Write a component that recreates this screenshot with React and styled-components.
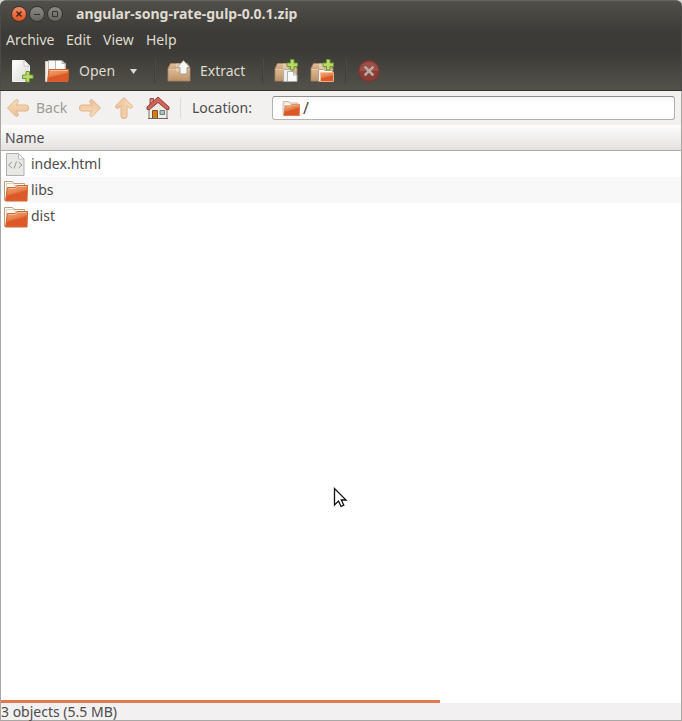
import styled, { createGlobalStyle, css } from 'styled-components';

const GlobalStyle = createGlobalStyle`
  * {
    box-sizing: border-box;
  }

  body {
    margin: 0;
    background: #d8d7d4;
    font-family: "Noto Sans", "Open Sans", sans-serif;
    font-size: 14px;
    line-height: 20px;
    color: #4c4c4c;
  }

  button, input {
    font: inherit;
    color: inherit;
  }
`;

const Window = styled.div`
  display: flex;
  flex-direction: column;
  min-height: 100vh;
  position: relative;
`;

/* --- DARK TOP --- */
const Chrome = styled.header`
  color: #dfdbd2;
  background: linear-gradient(180deg, #504f49 0, #3c3b37 32px, #3c3b37 52px, #53524a 100%);
  border: 1px solid #4b4a46;
  border-top-color: #67655f;
  border-bottom-color: #35332f;
  border-radius: 6px 6px 0 0;
`;

const TitleBar = styled.div`
  display: flex;
  align-items: center;
  gap: 2px;
  height: 26px;
  padding-left: 10px;
`;

const WindowButton = styled.button`
  display: flex;
  width: 16px;
  height: 16px;
  padding: 0;
  border: 1px solid #353430;
  border-radius: 50%;
  background: ${({ $close }) => ($close
    ? 'linear-gradient(180deg, #f58a66, #e2531f)'
    : 'linear-gradient(180deg, #8b8a84, #65645e)')};

  svg {
    width: 14px;
    height: 14px;
  }
`;

const Title = styled.h1`
  margin: 0 0 0 11px;
  font-size: 14px;
  line-height: 20px;
  font-weight: 700;
`;

const MenuBar = styled.nav`
  display: flex;
  height: 25px;
  padding-left: 5px;
`;

const MenuItem = styled.button`
  width: ${({ $width }) => $width}px;
  padding: 0;
  border: 0;
  background: none;
  text-align: left;
  white-space: nowrap;
`;

const Toolbar = styled.div`
  display: flex;
  align-items: center;
  height: 38px;
  padding-left: 9px;
`;

const ToolButton = styled.button`
  display: flex;
  align-items: center;
  flex: none;
  gap: ${({ $gap = 0 }) => $gap}px;
  width: ${({ $width }) => $width}px;
  height: 26px;
  padding: 0;
  border: 0;
  background: none;
  white-space: nowrap;

  svg {
    flex: none;
  }

  &:disabled {
    color: #9b9c95;
  }
`;

const Separator = styled.span`
  flex: none;
  width: 1px;
  height: ${({ $light }) => ($light ? 20 : 24)}px;
  margin-right: ${({ $space }) => $space}px;
  background: ${({ $light }) => ($light ? '#dcdad8' : '#403f3a')};
  ${({ $light }) => !$light && css`
    box-shadow: 1px 0 #4d4c46;
  `}
`;

/* --- LOCATION --- */
const LocationBar = styled.div`
  display: flex;
  align-items: center;
  height: 34px;
  padding: 0 6px 0 5px;
  background: #f3f1f0;
  border: 0 solid #a9a8a5;
  border-width: 0 1px;
`;

const LocationLabel = styled.label`
  flex: none;
  width: 80px;
`;

const LocationField = styled.div`
  display: flex;
  flex: 1;
  align-items: center;
  gap: 3px;
  height: 24px;
  padding-left: 9px;
  border: 1px solid #b5b2ae;
  border-top-color: #8f8d89;
  border-radius: 3px;
  background: linear-gradient(180deg, #f7f7f6, #fff 6px);

  input {
    flex: 1;
    min-width: 0;
    padding: 0;
    border: 0;
    outline: 0;
    background: none;
    font-size: 16px;
  }
`;

/* --- FILE LIST --- */
const ListPane = styled.main`
  flex: 1;
  background: #fff;
  border: 0 solid #a9a8a5;
  border-width: 0 1px;
`;

const FileTable = styled.table`
  width: 100%;
  border-collapse: separate;
  border-spacing: 0;

  th {
    height: 26px;
    padding: 0 4px;
    text-align: left;
    font-weight: 400;
    background: linear-gradient(180deg, #fdfdfd, #e4e2e1);
    border-bottom: 1px solid #aeaba8;
  }

  td {
    height: 26px;
    padding: 0 2px;
  }

  tbody tr:nth-child(even) {
    background: #f8f8f8;
  }
`;

const FileName = styled.span`
  display: flex;
  align-items: center;
  gap: 3px;
`;

const Pointer = styled.svg`
  position: absolute;
  left: 333px;
  top: 486px;
  width: 15px;
  height: 23px;
`;

/* --- STATUS --- */
const Progress = styled.div`
  height: 3px;
  background: #fff;
  border: 0 solid #a9a8a5;
  border-width: 0 1px;
`;

const ProgressFill = styled.div`
  height: 100%;
  background: #df7b52;
`;

const StatusBar = styled.footer`
  height: 18px;
  line-height: 17px;
  background: #f2f0f0;
  border: 1px solid #a9a8a5;
  border-top: 0;
`;

const Gradients = () => (
  <svg width="0" height="0" style={{ position: 'absolute' }} aria-hidden="true">
    <defs>
      <linearGradient id="orange" x1="0" y1="0" x2=".4" y2="1">
        <stop offset="0" stopColor="#f0a878" />
        <stop offset=".5" stopColor="#e8834f" />
        <stop offset=".65" stopColor="#dc5826" />
        <stop offset="1" stopColor="#dd5a28" />
      </linearGradient>
      <linearGradient id="paper" x1="0" y1="0" x2="1" y2="1">
        <stop offset="0" stopColor="#fff" />
        <stop offset="1" stopColor="#d9d9d6" />
      </linearGradient>
      <linearGradient id="box" x1="0" y1="0" x2="0" y2="1">
        <stop offset="0" stopColor="#e0c09c" />
        <stop offset=".35" stopColor="#c9a079" />
        <stop offset=".42" stopColor="#d9b48e" />
        <stop offset="1" stopColor="#bd9269" />
      </linearGradient>
      <linearGradient id="arrow" x1="0" y1="0" x2="0" y2="1">
        <stop offset="0" stopColor="#f7dcb8" />
        <stop offset="1" stopColor="#ebc199" />
      </linearGradient>
    </defs>
  </svg>
);

const Plus = ({ x, y }) => (
  <path
    transform={`translate(${x} ${y})`}
    d="M4 .5h3.500V4H11v3.500H7.500V11H4V7.500H.5V4H4z"
    fill="#b9d86a"
    stroke="#6d9a2c"
  />
);

const NewIcon = () => (
  <svg width="26" height="26" viewBox="0 0 26 26">
    <path d="M2.500 2.500h12l5 5v16h-17z" fill="url(#paper)" stroke="#f4f4f1" />
    <path d="M14 2.500v5.500h5.500z" fill="#fff" stroke="#b9b9b4" strokeWidth=".8" />
    <Plus x={12} y={13} />
  </svg>
);

const OpenIcon = () => (
  <svg width="26" height="26" viewBox="0 0 26 26">
    <path d="M1.500 3.500h7l1 2h12v18h-20z" fill="#f3efe8" stroke="#d5cabd" />
    <path d="M4.500 2.500h6l3 3v10h-9z" fill="#f8f8f6" stroke="#aaa9a4" strokeWidth=".8" />
    <path d="M11.500 2.500h6.500l3 3v10h-9.500z" fill="#fff" stroke="#aaa9a4" strokeWidth=".8" />
    <path d="M18 2.500v3h3" fill="none" stroke="#999" strokeWidth=".8" />
    <path d="M5 11.500h19.500l-.5 12H3.500z" fill="url(#orange)" stroke="#d4602f" />
    <path d="M6 12.500h17.500" stroke="#ffc18d" />
  </svg>
);

const Box = () => (
  <>
    <path d="M4.500 5.500h17l2.500 5v12.500H2V10.500z" fill="url(#box)" stroke="#ac8562" strokeWidth=".8" />
    <path d="M2.500 11.500h21" stroke="#e7c8a5" />
    <path d="M10 5.500h5v8h-5z" fill="#ecd7bc" opacity=".6" />
  </>
);

const ExtractIcon = () => (
  <svg width="26" height="26" viewBox="0 0 26 26">
    <Box />
    <path d="M17.500 2.500l6.500 7h-3V16h-7V9.500h-3z" fill="#f7f7f5" stroke="#99938a" strokeWidth=".8" />
  </svg>
);

const AddFilesIcon = () => (
  <svg width="26" height="26" viewBox="0 0 26 26">
    <Box />
    <path d="M10.500 11.500h8v12h-8z" fill="#eee" stroke="#a8a8a4" strokeWidth=".8" />
    <path d="M14.500 13.500h6l3.500 3.500v6.500h-9.500z" fill="#f9f9f7" stroke="#a2a29e" strokeWidth=".8" />
    <path d="M20.500 13.500V17H24" fill="none" stroke="#999" strokeWidth=".8" />
    <Plus x={13.5} y={1} />
  </svg>
);

const AddFolderIcon = () => (
  <svg width="26" height="26" viewBox="0 0 26 26">
    <Box />
    <path d="M9.500 11.500h5l1 1h8v11h-14z" fill="#fbf6ec" stroke="#a8907a" strokeWidth=".8" />
    <path d="M11.500 14.500h13v9h-13z" fill="url(#orange)" stroke="#f7bd8f" strokeWidth=".8" />
    <Plus x={13.5} y={1} />
  </svg>
);

const StopIcon = () => (
  <svg width="26" height="26" viewBox="0 0 26 26">
    <circle cx="13" cy="13" r="10.500" fill="#8a3d37" stroke="#7a342e" />
    <path d="M3.500 13a9.500 9.500 0 0 1 19 0z" fill="#9a4f49" />
    <path d="M9.500 9.500l7 7M16.500 9.500l-7 7" stroke="#b9aaa2" strokeWidth="2.500" strokeLinecap="square" />
  </svg>
);

const ArrowIcon = ({ turn = 0 }) => (
  <svg width="24" height="24" viewBox="0 0 24 24">
    <path
      transform={`rotate(${turn} 12 12)`}
      d="M1.500 12L9.500 4Q11 3 12 4.300Q12.800 5.500 12 6.500L10 9H20.500Q22.500 9 22.500 12T20.500 15H10L12 17.500Q12.800 18.500 12 19.700Q11 21 9.500 20z"
      fill="url(#arrow)"
      stroke="#e0b68d"
      strokeLinejoin="round"
    />
  </svg>
);

const HomeIcon = () => (
  <svg width="24" height="24" viewBox="0 0 24 24">
    <path d="M3 11L12 4l9 7v11.500H3z" fill="#efede7" stroke="#77736d" />
    <path d="M4 2.500h3.500v6H4z" fill="#d98a80" stroke="#8f4d46" />
    <path d="M12 1L1 11v2.500h2.500L12 6.500l8.500 7H23V11z" fill="#d2645b" stroke="#91403a" strokeLinejoin="round" />
    <path d="M6.500 14.500h5v8h-5z" fill="#cf7d22" stroke="#8e4d13" />
    <path d="M14 14.500h4.500V18.500H14z" fill="#acc3c4" stroke="#6c7f80" />
    <path d="M2 22.500h20" stroke="#6d6861" />
  </svg>
);

const FolderIcon = ({ size = 25 }) => (
  <svg width={size} height={size} viewBox="0 0 25 25">
    <path d="M1.500 22.500v-19h8l1.500 2h10.500v5" fill="#fff8ed" stroke="#b99f84" />
    <path d="M3.500 21V5.500h7l1 2H22v4" fill="#fffdf8" stroke="#d6bfa6" strokeWidth=".7" />
    <path d="M4.500 9.500H12l2-2h10.500l-.5 15.500H2.500z" fill="url(#orange)" stroke="#cf6637" />
    <path d="M5.500 10.500h7l2-2h9" fill="none" stroke="#f9c69c" strokeWidth=".8" />
  </svg>
);

const HtmlIcon = () => (
  <svg width="25" height="25" viewBox="0 0 25 25">
    <path d="M3.500 1.500h12l5.500 5.500v16.500H3.500z" fill="#e8e8e7" stroke="#b0b0b0" />
    <path d="M15.500 1.500V7H21z" fill="#fafafa" stroke="#b0b0b0" strokeWidth=".8" />
    <path d="M9 10l-3.500 3L9 16M15.500 10l3.500 3-3.500 3M13.500 9.500l-2.500 7" fill="none" stroke="#999" />
  </svg>
);

const menus = [
  { label: 'Archive', width: 60 },
  { label: 'Edit', width: 37 },
  { label: 'View', width: 43 },
  { label: 'Help', width: 40 },
];

const files = [
  { name: 'index.html', icon: <HtmlIcon /> },
  { name: 'libs', icon: <FolderIcon /> },
  { name: 'dist', icon: <FolderIcon /> },
];

const App = () => {
  return (
    <Window>
      <GlobalStyle />
      <Gradients />
      <Chrome>
        <TitleBar>
          <WindowButton $close aria-label="Close">
            <svg viewBox="0 0 14 14"><path d="M4.500 4.500l5 5M9.500 4.500l-5 5" stroke="#4a2216" strokeWidth="1.500" /></svg>
          </WindowButton>
          <WindowButton aria-label="Minimize">
            <svg viewBox="0 0 14 14"><path d="M4 7.500h6" stroke="#34332f" /></svg>
          </WindowButton>
          <WindowButton aria-label="Maximize">
            <svg viewBox="0 0 14 14"><path d="M4.500 4.500h5v5h-5z" fill="none" stroke="#34332f" /></svg>
          </WindowButton>
          <Title>angular-song-rate-gulp-0.0.1.zip</Title>
        </TitleBar>
        <MenuBar>
          {menus.map(({ label, width }) => (
            <MenuItem key={label} $width={width}>{label}</MenuItem>
          ))}
        </MenuBar>
        <Toolbar>
          <ToolButton $width={34} aria-label="New"><NewIcon /></ToolButton>
          <ToolButton $width={84} $gap={9}><OpenIcon />Open</ToolButton>
          <ToolButton $width={26} aria-label="Recent archives">
            <svg width="10" height="8" viewBox="0 0 10 8"><path d="M2 2h7L5.500 7z" fill="#dfdbd2" /></svg>
          </ToolButton>
          <Separator $space={11} />
          <ToolButton $width={96} $gap={8}><ExtractIcon />Extract</ToolButton>
          <Separator $space={10} />
          <ToolButton $width={36} aria-label="Add files"><AddFilesIcon /></ToolButton>
          <ToolButton $width={36} aria-label="Add folder"><AddFolderIcon /></ToolButton>
          <Separator $space={10} />
          <ToolButton $width={26} disabled aria-label="Stop"><StopIcon /></ToolButton>
        </Toolbar>
      </Chrome>
      <LocationBar>
        <ToolButton $width={72} $gap={6} disabled><ArrowIcon />Back</ToolButton>
        <ToolButton $width={34} disabled aria-label="Forward"><ArrowIcon turn={180} /></ToolButton>
        <ToolButton $width={34} disabled aria-label="Up"><ArrowIcon turn={90} /></ToolButton>
        <ToolButton $width={34} aria-label="Home"><HomeIcon /></ToolButton>
        <Separator $light $space={11} />
        <LocationLabel htmlFor="location">Location:</LocationLabel>
        <LocationField>
          <FolderIcon size={18} />
          <input id="location" type="text" defaultValue="/" />
        </LocationField>
      </LocationBar>
      <ListPane>
        <FileTable>
          <thead>
            <tr><th scope="col">Name</th></tr>
          </thead>
          <tbody>
            {files.map(({ name, icon }) => (
              <tr key={name}>
                <td><FileName>{icon}{name}</FileName></td>
              </tr>
            ))}
          </tbody>
        </FileTable>
      </ListPane>
      <Progress>
        <ProgressFill style={{ width: `${(439 / 680) * 100}%` }} />
      </Progress>
      <StatusBar>3 objects (5.5 MB)</StatusBar>
      <Pointer viewBox="0 0 15 23">
        <path d="M1.500 2.500v16.500l4-4 2.500 5.500 2.800-1.300-2.500-5.200h4.700z" fill="#fff" stroke="#111" strokeWidth="1.300" />
      </Pointer>
    </Window>
  );
};

export default App;
